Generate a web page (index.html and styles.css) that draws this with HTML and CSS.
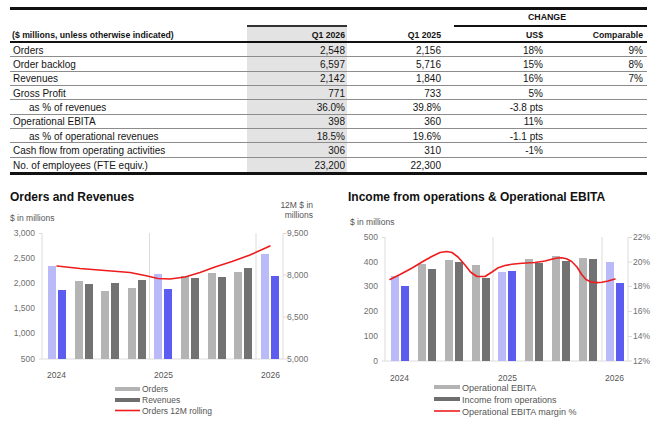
FILE: index.html
```html
<!DOCTYPE html>
<html lang="en">
<head>
<meta charset="utf-8">
<title>Key figures Q1 2026</title>
<link rel="stylesheet" href="styles.css">
</head>
<body>
<main class="page">
  <div class="kpi">
    <div class="row row-group">
      <div class="change">CHANGE</div>
    </div>
    <div class="row row-head">
      <div class="lab">($ millions, unless otherwise indicated)</div>
      <div class="num cur">Q1 2026</div>
      <div class="num prev">Q1 2025</div>
      <div class="num usd">US$</div>
      <div class="num comp">Comparable</div>
    </div>
    <div class="row item">
      <div class="lab">Orders</div><div class="num cur">2,548</div><div class="num prev">2,156</div><div class="num usd">18%</div><div class="num comp">9%</div>
    </div>
    <div class="row item">
      <div class="lab">Order backlog</div><div class="num cur">6,597</div><div class="num prev">5,716</div><div class="num usd">15%</div><div class="num comp">8%</div>
    </div>
    <div class="row item">
      <div class="lab">Revenues</div><div class="num cur">2,142</div><div class="num prev">1,840</div><div class="num usd">16%</div><div class="num comp">7%</div>
    </div>
    <div class="row item">
      <div class="lab">Gross Profit</div><div class="num cur">771</div><div class="num prev">733</div><div class="num usd">5%</div><div class="num comp"></div>
    </div>
    <div class="row item">
      <div class="lab sub">as % of revenues</div><div class="num cur">36.0%</div><div class="num prev">39.8%</div><div class="num usd">-3.8 pts</div><div class="num comp"></div>
    </div>
    <div class="row item">
      <div class="lab">Operational EBITA</div><div class="num cur">398</div><div class="num prev">360</div><div class="num usd">11%</div><div class="num comp"></div>
    </div>
    <div class="row item">
      <div class="lab sub">as % of operational revenues</div><div class="num cur">18.5%</div><div class="num prev">19.6%</div><div class="num usd">-1.1 pts</div><div class="num comp"></div>
    </div>
    <div class="row item">
      <div class="lab">Cash flow from operating activities</div><div class="num cur">306</div><div class="num prev">310</div><div class="num usd">-1%</div><div class="num comp"></div>
    </div>
    <div class="row item">
      <div class="lab">No. of employees (FTE equiv.)</div><div class="num cur">23,200</div><div class="num prev">22,300</div><div class="num usd"></div><div class="num comp"></div>
    </div>
  </div>

  <div class="charts">
    <section class="chart chart-left">
      <h2>Orders and Revenues</h2>
      <svg width="335" height="222" viewBox="0 203 335 222">
        <text class="unit" x="10" y="221">$ in millions</text>
        <text class="unit" x="313" y="208" text-anchor="end">12M $ in</text>
        <text class="unit" x="313" y="218" text-anchor="end">millions</text>

        <g class="grid">
          <line x1="42" y1="233" x2="42" y2="359"/>
          <line x1="149.5" y1="233" x2="149.5" y2="359"/>
          <line x1="256" y1="233" x2="256" y2="359"/>
          <line x1="283" y1="233" x2="283" y2="359"/>
          <line x1="39" y1="359" x2="287" y2="359"/>
          <line x1="39" y1="233.5" x2="42" y2="233.5"/>
          <line x1="283" y1="233.5" x2="287" y2="233.5"/>
          <line x1="283" y1="275" x2="287" y2="275"/>
          <line x1="283" y1="317" x2="287" y2="317"/>
        </g>

        <g class="ax" text-anchor="end">
          <text x="35" y="236">3,000</text>
          <text x="35" y="261">2,500</text>
          <text x="35" y="286">2,000</text>
          <text x="35" y="311">1,500</text>
          <text x="35" y="336">1,000</text>
          <text x="35" y="362">500</text>
        </g>
        <g class="ax">
          <text x="287" y="236">9,500</text>
          <text x="287" y="278">8,000</text>
          <text x="287" y="320">6,500</text>
          <text x="287" y="362">5,000</text>
        </g>

        <g class="bars">
          <rect class="q1a" x="48" y="266" width="8" height="93"/><rect class="q1b" x="58" y="290" width="8" height="69"/>
          <rect class="ga" x="75" y="281" width="8" height="78"/><rect class="gb" x="85" y="284" width="8" height="75"/>
          <rect class="ga" x="101" y="291" width="8" height="68"/><rect class="gb" x="111" y="283" width="8" height="76"/>
          <rect class="ga" x="128" y="288" width="8" height="71"/><rect class="gb" x="138" y="280" width="8" height="79"/>
          <rect class="q1a" x="154" y="274" width="8" height="85"/><rect class="q1b" x="164" y="289" width="8" height="70"/>
          <rect class="ga" x="181" y="276" width="8" height="83"/><rect class="gb" x="191" y="278" width="8" height="81"/>
          <rect class="ga" x="208" y="273" width="8" height="86"/><rect class="gb" x="218" y="277" width="8" height="82"/>
          <rect class="ga" x="234" y="272" width="8" height="87"/><rect class="gb" x="244" y="268" width="8" height="91"/>
          <rect class="q1a" x="261" y="254" width="8" height="105"/><rect class="q1b" x="271" y="276" width="8" height="83"/>
        </g>

        <polyline class="trend" points="57,266 80,268.5 105,270.5 130,272.5 145,275.5 158,278.5 170,279 185,277 200,272.5 215,267 232,261.5 250,255 270,246"/>

        <g class="yr">
          <text x="47" y="378">2024</text>
          <text x="154" y="378">2025</text>
          <text x="261" y="378">2026</text>
        </g>

        <g class="lg">
          <rect x="115" y="387" width="25" height="4" fill="#b3b3b3"/>
          <text x="142" y="392">Orders</text>
          <rect x="115" y="398" width="25" height="4" fill="#6e6e6e"/>
          <text x="142" y="403">Revenues</text>
          <line x1="115" y1="410.5" x2="140" y2="410.5" stroke="#ee1c1c" stroke-width="1.6"/>
          <text x="142" y="413.5">Orders 12M rolling</text>
        </g>
      </svg>
    </section>

    <section class="chart chart-right">
      <h2>Income from operations &amp; Operational EBITA</h2>
      <svg width="327" height="222" viewBox="335 203 327 222">
        <text class="unit" x="350" y="225">$ in millions</text>

        <g class="grid">
          <line x1="385" y1="237" x2="385" y2="361"/>
          <line x1="493" y1="237" x2="493" y2="361"/>
          <line x1="602" y1="237" x2="602" y2="361"/>
          <line x1="628" y1="237" x2="628" y2="361"/>
          <line x1="382" y1="361" x2="632" y2="361"/>
          <line x1="382" y1="237.5" x2="385" y2="237.5"/>
          <line x1="628" y1="237.5" x2="632" y2="237.5"/>
          <line x1="628" y1="262" x2="632" y2="262"/>
          <line x1="628" y1="286.5" x2="632" y2="286.5"/>
          <line x1="628" y1="311.5" x2="632" y2="311.5"/>
          <line x1="628" y1="336.5" x2="632" y2="336.5"/>
        </g>

        <g class="ax" text-anchor="end">
          <text x="378" y="240">500</text>
          <text x="378" y="264.5">400</text>
          <text x="378" y="289">300</text>
          <text x="378" y="314">200</text>
          <text x="378" y="339">100</text>
          <text x="378" y="364">0</text>
        </g>
        <g class="ax">
          <text x="633" y="240">22%</text>
          <text x="633" y="264.5">20%</text>
          <text x="633" y="289">18%</text>
          <text x="633" y="314">16%</text>
          <text x="633" y="339">14%</text>
          <text x="633" y="364">12%</text>
        </g>

        <g class="bars">
          <rect class="q1a" x="391" y="276" width="8" height="85"/><rect class="q1b" x="401" y="286" width="8" height="75"/>
          <rect class="ga" x="418" y="264" width="8" height="97"/><rect class="gb" x="428" y="269" width="8" height="92"/>
          <rect class="ga" x="445" y="260" width="8" height="101"/><rect class="gb" x="455" y="262" width="8" height="99"/>
          <rect class="ga" x="472" y="265" width="8" height="96"/><rect class="gb" x="482" y="278" width="8" height="83"/>
          <rect class="q1a" x="498" y="272" width="8" height="89"/><rect class="q1b" x="508" y="271" width="8" height="90"/>
          <rect class="ga" x="525" y="259" width="8" height="102"/><rect class="gb" x="535" y="263" width="8" height="98"/>
          <rect class="ga" x="552" y="256" width="8" height="105"/><rect class="gb" x="562" y="261" width="8" height="100"/>
          <rect class="ga" x="579" y="258" width="8" height="103"/><rect class="gb" x="589" y="259" width="8" height="102"/>
          <rect class="q1a" x="606" y="262" width="8" height="99"/><rect class="q1b" x="616" y="283" width="8" height="78"/>
        </g>

        <polyline class="trend" points="390,279.5 400,274.5 411.7,268.3 422,262 431.7,256.5 440,252.5 446.7,251.5 452,252.5 458,257 465,265 471,272.5 477,276.5 485,276.5 492,272 498.3,267.7 505,265.5 511.7,264.3 522,263.3 535,262.5 545,261 551.7,259.3 557,258 561.7,257.8 566.5,258.8 571.7,261.5 577,267 581.7,274.5 586,279.5 591,282 597,282.6 602,282.3 608,281 615,279"/>

        <g class="yr">
          <text x="390" y="381">2024</text>
          <text x="498" y="381">2025</text>
          <text x="605" y="381">2026</text>
        </g>

        <g class="lg lg-right">
          <rect x="434" y="385" width="26" height="4" fill="#b3b3b3"/>
          <text x="462" y="390.5">Operational EBITA</text>
          <rect x="434" y="397" width="26" height="4" fill="#6e6e6e"/>
          <text x="462" y="402.5">Income from operations</text>
          <line x1="434" y1="411" x2="460" y2="411" stroke="#ee1c1c" stroke-width="1.6"/>
          <text x="462" y="414.5">Operational EBITA margin %</text>
        </g>
      </svg>
    </section>
  </div>
</main>
</body>
</html>
```

FILE: styles.css
```css
* {
  box-sizing: border-box;
}

html,
body {
  margin: 0;
  padding: 0;
}

body {
  width: 662px;
  height: 429px;
  overflow: hidden;
  background: #ffffff;
  color: #141414;
  font-family: "Liberation Sans", Arial, sans-serif;
}

/* ---------- key figures table ---------- */

.kpi {
  width: 637px;
  margin: 7px 0 0 10px;
  border-top: 3px solid #111111;
  border-bottom: 3px solid #111111;
  font-size: 10px;
}

.row {
  display: grid;
  grid-template-columns: 237px 100px 107px 92px 101px;
}

.row > div {
  display: flex;
  align-items: flex-end;
  line-height: 11px;
  white-space: nowrap;
}

.row-group {
  height: 14.5px;
}

.row-group .change {
  grid-column: 4 / span 2;
  align-items: center;
  justify-content: center;
  padding-right: 7px;
  padding-top: 1px;
  font-size: 8.8px;
  font-weight: 700;
}

.row-head {
  height: 18.5px;
  border-bottom: 2px solid #111111;
  font-size: 8.7px;
  font-weight: 700;
}

.row-head .lab {
  padding-left: 2px;
}

.row-head .cur {
  border-top: 2px solid #333333;
}

.row-head .usd,
.row-head .comp {
  border-top: 2px solid #111111;
}

.item {
  height: 14.33px;
  border-bottom: 1px solid #8c8c8c;
}

.item > div {
  padding-bottom: 0.5px;
}

.item:last-child {
  border-bottom: 0;
}

.lab {
  padding-left: 3px;
}

.lab.sub {
  padding-left: 19px;
}

.num {
  justify-content: flex-end;
}

.cur {
  background: #e3e3e3;
  padding-right: 2px;
}

.prev {
  padding-right: 13px;
}

.usd {
  padding-right: 3px;
}

.comp {
  padding-right: 4px;
}

/* ---------- charts ---------- */

.charts {
  display: grid;
  grid-template-columns: 335px 327px;
  margin-top: 16px;
}

.chart h2 {
  margin: 0;
  padding-left: 10px;
  font-size: 12px;
  line-height: 12px;
  font-weight: 700;
  color: #111111;
}

.chart-right h2 {
  padding-left: 13px;
}

.chart svg {
  display: block;
  overflow: visible;
}

.grid line {
  stroke: #dcdcdc;
  stroke-width: 1;
}

.unit {
  font-size: 8.5px;
  fill: #555555;
}

.ax {
  font-size: 8.5px;
  fill: #6f6f6f;
}

.yr {
  font-size: 8.5px;
  fill: #555555;
}

.lg {
  font-size: 8.5px;
  fill: #555555;
}

.lg-right {
  font-size: 9px;
}

.q1a {
  fill: #babaf9;
}

.q1b {
  fill: #5c5cf0;
}

.ga {
  fill: #b4b4b4;
}

.gb {
  fill: #727272;
}

.trend {
  fill: none;
  stroke: #ee1c1c;
  stroke-width: 1.6;
  stroke-linejoin: round;
  stroke-linecap: round;
}
```
